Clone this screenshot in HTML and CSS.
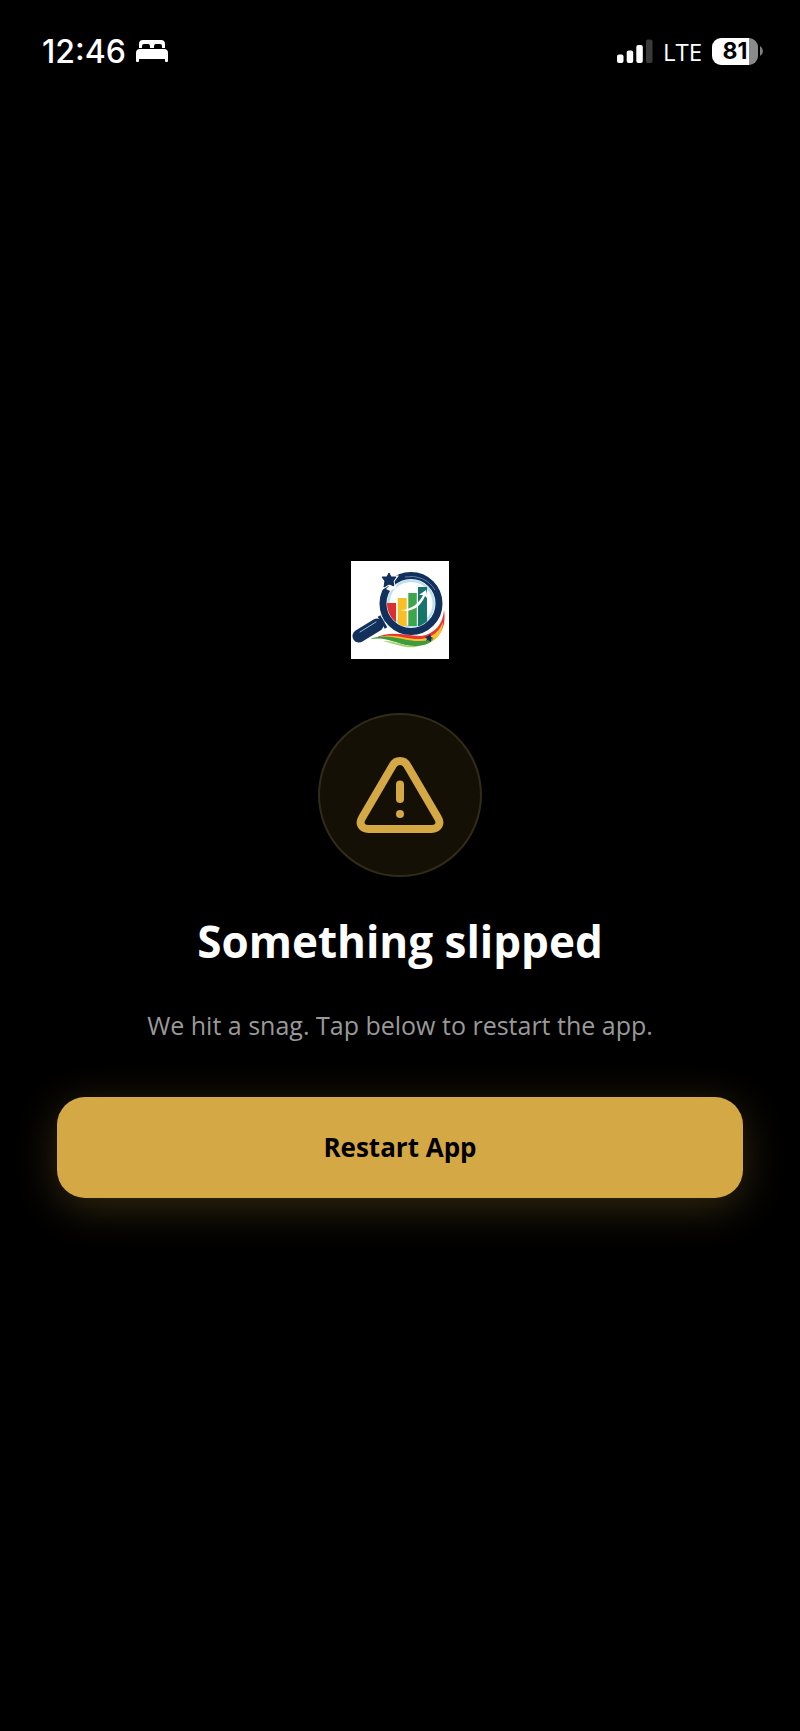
FILE: index.html
```
<!DOCTYPE html>
<html lang="en">
<head>
    <meta charset="UTF-8">
    <meta name="viewport" content="width=device-width, initial-scale=1.0">
    <title>Something slipped</title>
    <link rel="stylesheet" href="styles.css">
</head>
<body>
    <!-- Status Bar -->
    <header class="status-bar">
        <div class="status-left">
            <span class="time">12:46</span>
            <svg class="bed-icon" width="32" height="22" viewBox="0 0 32 22" fill="#fff" aria-hidden="true">
                <path d="M3 8V4Q3 0 7 0H25Q29 0 29 4V8H26V6Q26 4 24 4H20Q18 4 18 6V8H14V6Q14 4 12 4H8Q6 4 6 6V8Z"/>
                <path d="M0 21V13Q0 9 4 9H28Q32 9 32 13V21Q32 22 31 22H30Q29 22 29 21V19H3V21Q3 22 2 22H1Q0 22 0 21Z"/>
            </svg>
        </div>
        <div class="status-right">
            <svg class="signal-icon" width="36" height="24" viewBox="0 0 36 24" fill="#fff" aria-hidden="true">
                <rect x="0" y="15.500" width="6.500" height="8.500" rx="2"/>
                <rect x="9.700" y="11.500" width="6.500" height="12.500" rx="2"/>
                <rect x="19.300" y="6" width="6.500" height="18" rx="2"/>
                <rect x="29" y="0.500" width="6.500" height="23.500" rx="2" fill="#3a3a3a"/>
            </svg>
            <span class="network">LTE</span>
            <div class="battery">
                <span class="battery-level">81</span>
                <svg width="3" height="10" viewBox="0 0 3 10" fill="#808080" aria-hidden="true">
                    <path d="M0 0Q3 2 3 5T0 10Z"/>
                </svg>
            </div>
        </div>
    </header>

    <!-- Error Screen -->
    <main class="error-screen">
        <svg class="logo" width="98" height="98" viewBox="0 0 98 98" role="img" aria-label="Logo">
            <defs>
                <clipPath id="lens">
                    <circle cx="60" cy="42.500" r="24"/>
                </clipPath>
            </defs>
            <rect width="98" height="98" fill="#fff"/>
            <!-- swooshes -->
            <path d="M24 77C40 69 54 75 70 75C84 73 92 63 93 49C96 68 87 80 72 82C56 82 43 72 24 77Z" fill="#e8382f"/>
            <path d="M26 77C42 71 55 79 70 78C82 77 89 69 92 61C92 73 84 82 71 84C54 85 44 74 26 77Z" fill="#f8c12c"/>
            <path d="M19 78C38 71 54 81 70 80C76 80 80 78 83 77C79 83 73 85 64 85C48 85 38 75 19 78Z" fill="#3f9c3e"/>
            <path d="M32 80C44 79 52 86 68 85C58 89 44 83 32 80Z" fill="#a8d36b"/>
            <path d="M74 76l3-1 2-2 1 3 2 1-2 1 0 3-3-2-2 1 1-2Z" fill="#12305c"/>
            <!-- handle -->
            <path d="M30 61L37 56" stroke="#b8d6e6" stroke-width="5"/>
            <path d="M8 75L26 64" stroke="#12305c" stroke-width="13" stroke-linecap="round"/>
            <path d="M28 55L35 67" stroke="#12305c" stroke-width="3"/>
            <path d="M9 71L25 61" stroke="#9fb9d0" stroke-width="1" stroke-linecap="round"/>
            <!-- lens and chart -->
            <circle cx="60" cy="42.500" r="25" fill="#fff"/>
            <g clip-path="url(#lens)">
                <circle cx="60" cy="42.500" r="23" fill="none" stroke="#b9e2ee" stroke-width="3"/>
                <rect x="36" y="42" width="9" height="24" fill="#dc3030"/>
                <rect x="46.700" y="37" width="9" height="28" fill="#f8bf27"/>
                <rect x="57.300" y="32" width="8.500" height="33" fill="#3ba64b"/>
                <rect x="67" y="26" width="9" height="39" fill="#17766a"/>
            </g>
            <path d="M49 49C61 49 68 42 72 34L68 34L75 29L77 38L74 35C70 45 62 52 49 49Z" fill="#fff"/>
            <circle cx="60" cy="42.500" r="28" fill="none" stroke="#12305c" stroke-width="7"/>
            <path d="M54 16A28 28 0 0 1 84 29" fill="none" stroke="#5f81a8" stroke-width="1"/>
            <!-- star -->
            <path d="M38 12L40 16L45 16L42 20L43 25L38 23L33 26L34 20L31 16L36 16Z" fill="#12305c" stroke="#fff" stroke-width="3" paint-order="stroke"/>
            <path d="M38 12L40 16L45 16L42 20L43 25L38 23L33 26L34 20L31 16L36 16Z" fill="#12305c" stroke="#12305c" stroke-width="1"/>
            <path d="M35 28L39 24L42 26L46 22L45 27L39 30Z" fill="#fff"/>
        </svg>

        <div class="warning-badge">
            <svg width="90" height="80" viewBox="0 0 90 80" fill="none" stroke="#d4a844" stroke-width="8" stroke-linecap="round" stroke-linejoin="round" aria-hidden="true">
                <path d="M38 10L7 63C3.500 69 7 74 13.500 74H76.500C83 74 86.500 69 83 63L52 10C49 4.500 41 4.500 38 10Z"/>
                <path d="M45 29.500V44"/>
                <circle cx="45" cy="59" r="4" fill="#d4a844" stroke="none"/>
            </svg>
        </div>

        <h1>Something slipped</h1>
        <p>We hit a snag. Tap below to restart the app.</p>
        <button type="button" class="restart-button">Restart App</button>
    </main>
</body>
</html>
```
FILE: styles.css
```
/* Global Styles */
* {
    box-sizing: border-box;
}

body {
    font-family: "Open Sans", sans-serif;
    margin: 0;
    min-height: 100vh;
    display: flex;
    flex-direction: column;
    background-color: #000;
    color: #fff;
}

/* Status Bar */
.status-bar {
    display: flex;
    justify-content: space-between;
    align-items: center;
    height: 102px;
    padding: 0 37px 0 42px;
    font-family: Inter, sans-serif;
}

.status-left,
.status-right {
    display: flex;
    align-items: center;
    gap: 10px;
}

.time {
    font-size: 32px;
    font-weight: 500;
}

.network {
    font-family: "Open Sans", sans-serif;
    font-size: 24px;
    font-weight: 500;
}

.battery {
    display: flex;
    align-items: center;
    gap: 2px;
}

.battery-level {
    width: 46px;
    line-height: 27px;
    border-radius: 9px;
    background: linear-gradient(to right, #fff 81%, #8a8a8a 81%);
    color: #000;
    font-size: 23px;
    font-weight: 700;
    text-align: center;
}

/* Error Screen */
.error-screen {
    flex: 1;
    display: flex;
    flex-direction: column;
    align-items: center;
    justify-content: center;
    padding: 0 57px 74px;
    text-align: center;
}

.warning-badge {
    display: flex;
    align-items: center;
    justify-content: center;
    width: 164px;
    height: 164px;
    margin-top: 54px;
    border: 2px solid #322b18;
    border-radius: 50%;
    background-color: #151006;
}

h1 {
    margin: 34px 0;
    font-size: 44px;
    line-height: 60px;
    font-weight: 700;
}

p {
    margin: 0 0 52px;
    color: #999;
    font-size: 25px;
    line-height: 40px;
}

/* Button */
.restart-button {
    width: 100%;
    padding: 30px;
    background-color: #d4a844;
    color: #000;
    font-family: inherit;
    font-size: 26px;
    line-height: 41px;
    font-weight: 700;
    border: none;
    border-radius: 28px;
    box-shadow: 0 9px 44px rgba(212, 168, 68, 0.25);
    cursor: pointer;
}
```
